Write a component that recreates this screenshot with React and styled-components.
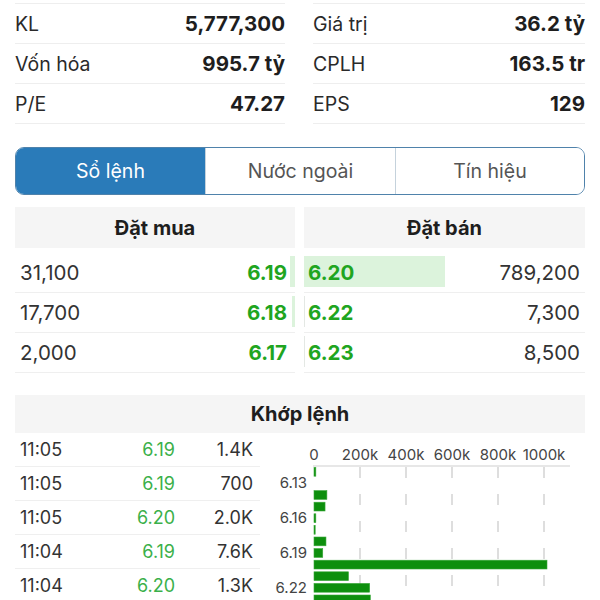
import React from "react";
import styled, { createGlobalStyle } from "styled-components";

const GlobalStyle = createGlobalStyle`
  html, body {
    margin: 0;
    padding: 0;
    background: #fff;
    overflow: hidden;
  }
  body {
    font-family: Inter, "Noto Sans", "Liberation Sans", sans-serif;
    color: #222;
  }
`;

const Page = styled.div`
  width: 600px;
  height: 600px;
  overflow: hidden;
  padding: 0 15px;
  box-sizing: border-box;
`;

/* ---------- stats ---------- */
const StatsGrid = styled.div`
  display: grid;
  grid-template-columns: 270px 272px;
  column-gap: 28px;
  padding-top: 3px;
`;

const StatCol = styled.div`
  border-top: 1px solid #eeeeee;
`;

const StatRow = styled.div`
  height: 39px;
  border-bottom: 1px solid #eeeeee;
  display: flex;
  align-items: center;
  justify-content: space-between;
  font-size: 19.5px;
`;

const StatLabel = styled.span`
  color: #2a2a2a;
`;

const StatValue = styled.span`
  font-size: 20.5px;
  font-weight: 700;
  color: #1e1e1e;
`;

/* ---------- tabs ---------- */
const Tabs = styled.div`
  margin-top: 23px;
  height: 48px;
  box-sizing: border-box;
  border: 1.5px solid #4f82ab;
  border-radius: 9px;
  display: grid;
  grid-template-columns: 189px 190px 1fr;
  overflow: hidden;
`;

const Tab = styled.div`
  display: flex;
  align-items: center;
  justify-content: center;
  font-size: 19.5px;
  background: ${(p) => (p.$active ? "#2a7bb9" : "#fff")};
  color: ${(p) => (p.$active ? "#fff" : "#555")};
  & + & {
    border-left: 1.5px solid ${(p) => (p.$active ? "#2a7bb9" : "#c5d2dc")};
  }
`;

/* ---------- order book ---------- */
const Book = styled.div`
  margin-top: 12px;
  display: grid;
  grid-template-columns: 280px 281px;
  column-gap: 9px;
`;

const SideHead = styled.div`
  height: 41px;
  background: #f5f5f5;
  display: flex;
  align-items: center;
  justify-content: center;
  font-size: 20px;
  font-weight: 700;
  color: #1e1e1e;
  margin-bottom: 5px;
`;

const BookRow = styled.div`
  position: relative;
  height: 39px;
  border-bottom: 1px solid #efefef;
  display: flex;
  align-items: center;
  justify-content: space-between;
  padding: ${(p) => (p.$side === "buy" ? "0 8px 0 5px" : "0 5px 0 4px")};
  font-size: 20.5px;
`;

const Depth = styled.div`
  position: absolute;
  top: 3px;
  bottom: 5px;
  ${(p) => (p.$side === "buy" ? "right: 0;" : "left: 0;")}
  background: ${(p) => (p.$faint ? "#e4e8e4" : "#dcf3dc")};
`;

const Qty = styled.span`
  position: relative;
  color: #333;
  order: ${(p) => (p.$side === "buy" ? 0 : 1)};
`;

const BookPrice = styled.span`
  position: relative;
  font-weight: 700;
  color: #1fa51f;
`;

/* ---------- matched trades ---------- */
const MatchHead = styled.div`
  margin-top: 22px;
  height: 38px;
  background: #f5f5f5;
  display: flex;
  align-items: center;
  justify-content: center;
  font-size: 20px;
  font-weight: 700;
  color: #1e1e1e;
`;

const MatchBody = styled.div`
  display: grid;
  grid-template-columns: 245px 1fr;
  column-gap: 10px;
`;

const TradeRow = styled.div`
  height: 33px;
  border-bottom: 1px solid #efefef;
  display: grid;
  grid-template-columns: 1fr 70px 78px;
  align-items: center;
  padding: 0 7px 0 5px;
  font-size: 18px;
  color: #333;
`;

const TradeCell = styled.span`
  text-align: ${(p) => (p.$right ? "right" : "left")};
  color: ${(p) => p.$color || "#333"};
`;

const ChartSvg = styled.svg`
  display: block;
  font-family: Inter, "Noto Sans", "Liberation Sans", sans-serif;
`;

const stats = [
  [
    ["KL", "5,777,300"],
    ["Vốn hóa", "995.7 tỷ"],
    ["P/E", "47.27"],
  ],
  [
    ["Giá trị", "36.2 tỷ"],
    ["CPLH", "163.5 tr"],
    ["EPS", "129"],
  ],
];

const buys = [
  { qty: "31,100", price: "6.19", depth: 5 },
  { qty: "17,700", price: "6.18", depth: 3 },
  { qty: "2,000", price: "6.17", depth: 0 },
];

const sells = [
  { qty: "789,200", price: "6.20", depth: 141 },
  { qty: "7,300", price: "6.22", depth: 1, faint: true },
  { qty: "8,500", price: "6.23", depth: 1, faint: true },
];

const trades = [
  ["11:05", "6.19", "1.4K"],
  ["11:05", "6.19", "700"],
  ["11:05", "6.20", "2.0K"],
  ["11:04", "6.19", "7.6K"],
  ["11:04", "6.20", "1.3K"],
];

// volume in thousands per price level
const levels = [
  ["6.12", 8],
  ["6.13", 0],
  ["6.14", 56],
  ["6.15", 48],
  ["6.16", 8],
  ["6.17", 4],
  ["6.18", 52],
  ["6.19", 38],
  ["6.20", 1013],
  ["6.21", 150],
  ["6.22", 242],
  ["6.23", 245],
];

const VolumeChart = () => {
  const x0 = 44;
  const axisY = 33;
  const band = 11.6;
  const k = 0.23;
  const ticks = [0, 200, 400, 600, 800, 1000];
  return (
    <ChartSvg width="315" height="170" viewBox="0 0 315 170">
      {ticks.map((t) => (
        <text
          key={t}
          x={x0 + t * k}
          y={27}
          fontSize="15"
          fill="#444"
          textAnchor="middle"
        >
          {t === 0 ? "0" : `${t}k`}
        </text>
      ))}
      {ticks.slice(1).map((t) => (
        <line
          key={t}
          x1={x0 + t * k}
          x2={x0 + t * k}
          y1={axisY + 1}
          y2={170}
          stroke="#bdbdbd"
          strokeWidth="1"
          strokeDasharray="11 16"
        />
      ))}
      <line x1={x0 - 1} x2={300} y1={axisY} y2={axisY} stroke="#cfcfcf" strokeWidth="1" />
      {levels.map(([p, v], i) => {
        const y = axisY + i * band;
        return (
          <g key={p}>
            {v > 0 && (
              <rect
                x={x0}
                y={y + 1.4}
                width={Math.max(v * k, 1.2)}
                height={8.8}
                fill="#0d8f0d"
                stroke="#3aa83a"
                strokeWidth="0.6"
              />
            )}
            {i % 3 === 1 && (
              <text
                x={37}
                y={y + band / 2 + 5}
                fontSize="15"
                fill="#444"
                textAnchor="end"
              >
                {p}
              </text>
            )}
          </g>
        );
      })}
    </ChartSvg>
  );
};

export default function App() {
  return (
    <Page>
      <GlobalStyle />
      <StatsGrid>
        {stats.map((col, ci) => (
          <StatCol key={ci}>
            {col.map(([l, v]) => (
              <StatRow key={l}>
                <StatLabel>{l}</StatLabel>
                <StatValue>{v}</StatValue>
              </StatRow>
            ))}
          </StatCol>
        ))}
      </StatsGrid>

      <Tabs>
        <Tab $active>Sổ lệnh</Tab>
        <Tab>Nước ngoài</Tab>
        <Tab>Tín hiệu</Tab>
      </Tabs>

      <Book>
        <div>
          <SideHead>Đặt mua</SideHead>
          {buys.map((b) => (
            <BookRow key={b.price} $side="buy">
              {b.depth > 0 && <Depth $side="buy" style={{ width: b.depth }} />}
              <Qty $side="buy">{b.qty}</Qty>
              <BookPrice>{b.price}</BookPrice>
            </BookRow>
          ))}
        </div>
        <div>
          <SideHead>Đặt bán</SideHead>
          {sells.map((s) => (
            <BookRow key={s.price} $side="sell">
              {s.depth > 0 && (
                <Depth $side="sell" $faint={s.faint} style={{ width: s.depth }} />
              )}
              <BookPrice>{s.price}</BookPrice>
              <Qty $side="sell">{s.qty}</Qty>
            </BookRow>
          ))}
        </div>
      </Book>

      <MatchHead>Khớp lệnh</MatchHead>
      <MatchBody>
        <div>
          {trades.map(([t, p, v], i) => (
            <TradeRow key={i}>
              <TradeCell>{t}</TradeCell>
              <TradeCell $right $color="#3bb04a">
                {p}
              </TradeCell>
              <TradeCell $right>{v}</TradeCell>
            </TradeRow>
          ))}
        </div>
        <VolumeChart />
      </MatchBody>
    </Page>
  );
}
